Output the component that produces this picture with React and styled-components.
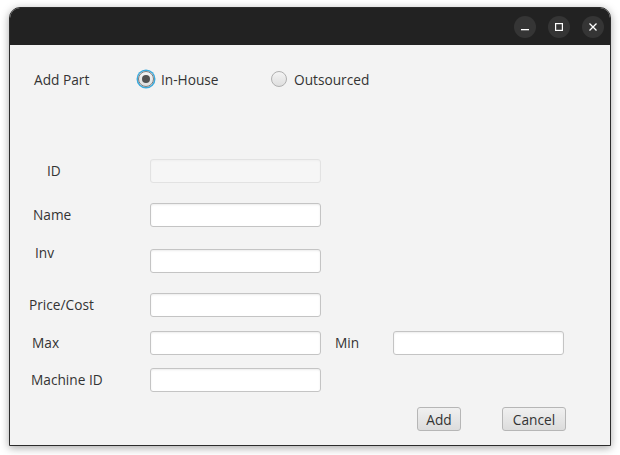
import React from 'react';
import styled, { createGlobalStyle } from 'styled-components';

const GlobalStyle = createGlobalStyle`
  html, body {
    margin: 0;
    padding: 0;
    background: #ffffff;
  }
  body {
    font-family: "Open Sans", "Noto Sans", sans-serif;
    font-size: 13.7px;
    color: #333333;
  }
`;

const Page = styled.div`
  width: 620px;
  height: 455px;
  padding: 7px 0 0 9px;
  box-sizing: border-box;
`;

const Window = styled.div`
  width: 602px;
  height: 439px;
  box-sizing: border-box;
  border-radius: 11px 11px 0 0;
  overflow: hidden;
  background: #f3f3f3;
  border: 1px solid #2c2c2c;
  box-shadow: 0 2px 9px rgba(0, 0, 0, 0.35);
  display: flex;
  flex-direction: column;
`;

const TitleBar = styled.div`
  height: 37px;
  background: #222222;
  display: flex;
  justify-content: flex-end;
  align-items: center;
  gap: 12px;
  padding-right: 6px;
  flex-shrink: 0;
`;

const WinButton = styled.button`
  width: 22px;
  height: 22px;
  border-radius: 50%;
  border: none;
  background: #353535;
  padding: 0;
  display: flex;
  align-items: center;
  justify-content: center;
  color: #ffffff;
`;

const Content = styled.div`
  display: flex;
  flex-direction: column;
  padding-top: 22px;
`;

const HeaderRow = styled.div`
  display: flex;
  align-items: center;
  height: 24px;
  padding-left: 24px;
`;

const Title = styled.span`
  width: 104px;
`;

const Radio = styled.label`
  display: flex;
  align-items: center;
  gap: 7px;
  width: ${p => p.$width}px;
`;

const RadioCircle = styled.span`
  width: 16px;
  height: 16px;
  border-radius: 50%;
  box-sizing: border-box;
  border: 1px solid ${p => (p.$checked ? '#7c7c7c' : '#b0b0b0')};
  background: linear-gradient(#f4f4f4, #dedede);
  display: flex;
  align-items: center;
  justify-content: center;
  box-shadow: ${p => (p.$checked ? '0 0 0 1.5px #3aa9dc' : 'none')};

  &::after {
    content: '';
    display: ${p => (p.$checked ? 'block' : 'none')};
    width: 8px;
    height: 8px;
    border-radius: 50%;
    background: #515151;
  }
`;

const Row = styled.div`
  display: flex;
  align-items: ${p => (p.$top ? 'flex-start' : 'center')};
  height: 24px;
  margin-top: ${p => p.$mt}px;
`;

const Label = styled.span`
  width: 140px;
  box-sizing: border-box;
  padding-left: ${p => p.$indent}px;
  margin-top: ${p => p.$lift || -1}px;
`;

const SideLabel = styled.span`
  width: 72px;
  box-sizing: border-box;
  padding-left: 14px;
  margin-top: -1px;
`;

const Field = styled.input`
  width: 171px;
  height: 24px;
  box-sizing: border-box;
  border: 1px solid #c4c4c4;
  border-radius: 3px;
  background: ${p => (p.disabled ? '#f6f6f6' : '#ffffff')};
  border-color: ${p => (p.disabled ? '#e2e2e2' : '#c4c4c4')};
  box-shadow: ${p => (p.disabled ? 'inset 0 1px 2px rgba(0,0,0,0.03)' : 'inset 0 1px 2px rgba(0,0,0,0.08)')};
  margin: 0;
  padding: 0 6px;
  font: inherit;
  outline: none;
`;

const ButtonRow = styled.div`
  display: flex;
  align-items: center;
  margin-top: 15px;
  padding-left: 407px;
  gap: 41px;
`;

const Button = styled.button`
  height: 24px;
  width: ${p => p.$width}px;
  box-sizing: border-box;
  border: 1px solid #b6b6b6;
  border-radius: 3px;
  background: linear-gradient(#f0f0f0, #dcdcdc);
  font: inherit;
  color: #333333;
  padding: 0;
`;

export default function App() {
  return (
    <Page>
      <GlobalStyle />
      <Window>
        <TitleBar>
          <WinButton aria-label="minimize">
            <svg width="10" height="10" viewBox="0 0 10 10">
              <rect x="1" y="7" width="8" height="1.3" fill="#fff" />
            </svg>
          </WinButton>
          <WinButton aria-label="maximize">
            <svg width="10" height="10" viewBox="0 0 10 10">
              <rect x="1.6" y="1.6" width="6.8" height="6.8" fill="none" stroke="#fff" strokeWidth="1.2" />
            </svg>
          </WinButton>
          <WinButton aria-label="close">
            <svg width="10" height="10" viewBox="0 0 10 10">
              <path d="M1.5 1.5 L8.5 8.5 M8.5 1.5 L1.5 8.5" stroke="#fff" strokeWidth="1.3" />
            </svg>
          </WinButton>
        </TitleBar>
        <Content>
          <HeaderRow>
            <Title>Add Part</Title>
            <Radio $width={133}>
              <RadioCircle $checked />
              In-House
            </Radio>
            <Radio $width={120}>
              <RadioCircle />
              Outsourced
            </Radio>
          </HeaderRow>

          <Row $mt={68}>
            <Label $indent={37}>ID</Label>
            <Field disabled />
          </Row>
          <Row $mt={20}>
            <Label $indent={23}>Name</Label>
            <Field />
          </Row>
          <Row $mt={22} $top>
            <Label $indent={25} $lift={-6}>Inv</Label>
            <Field />
          </Row>
          <Row $mt={20}>
            <Label $indent={19}>Price/Cost</Label>
            <Field />
          </Row>
          <Row $mt={14}>
            <Label $indent={22}>Max</Label>
            <Field />
            <SideLabel>Min</SideLabel>
            <Field />
          </Row>
          <Row $mt={13}>
            <Label $indent={21}>Machine ID</Label>
            <Field />
          </Row>

          <ButtonRow>
            <Button $width={44}>Add</Button>
            <Button $width={64}>Cancel</Button>
          </ButtonRow>
        </Content>
      </Window>
    </Page>
  );
}
